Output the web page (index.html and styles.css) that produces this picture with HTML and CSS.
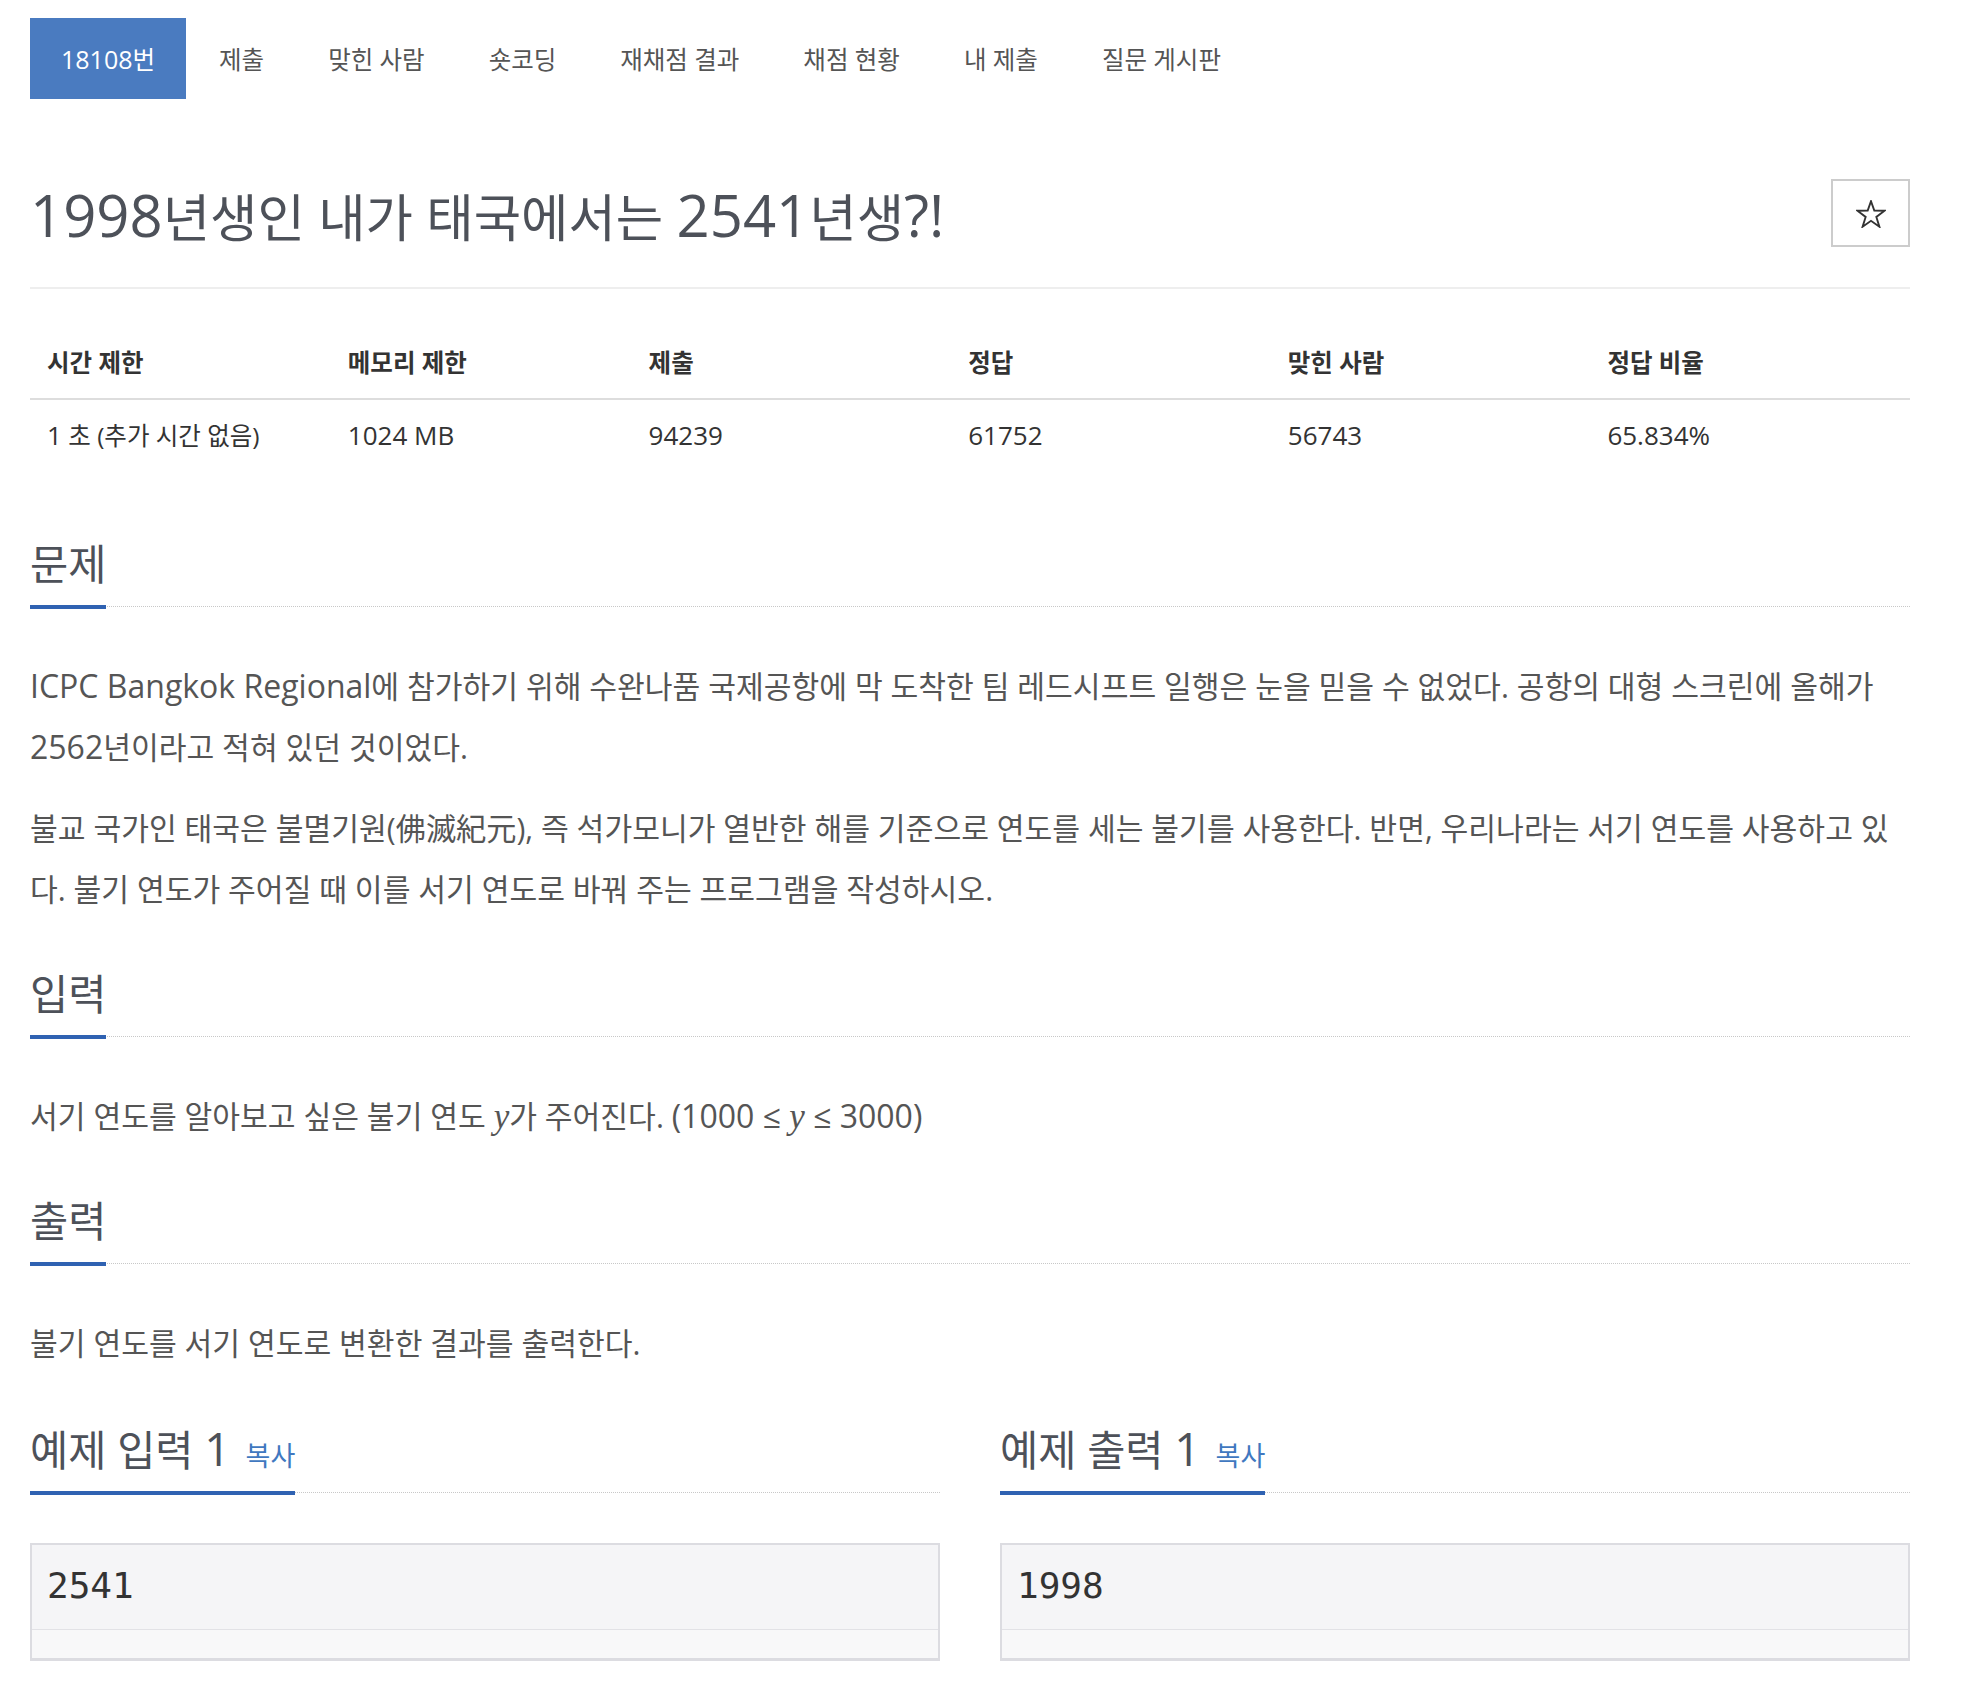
FILE: index.html
```html
<!DOCTYPE html>
<html lang="ko">
<head>
<meta charset="utf-8">
<title>18108번: 1998년생인 내가 태국에서는 2541년생?!</title>
<link rel="stylesheet" href="styles.css">
</head>
<body>
<div class="container">
  <ul class="nav">
    <li class="active"><a href="#"><span class="en">18108</span>번</a></li>
    <li><a href="#">제출</a></li>
    <li><a href="#">맞힌 사람</a></li>
    <li><a href="#">숏코딩</a></li>
    <li><a href="#">재채점 결과</a></li>
    <li><a href="#">채점 현황</a></li>
    <li><a href="#">내 제출</a></li>
    <li><a href="#">질문 게시판</a></li>
  </ul>

  <div class="page-header">
    <h1 class="title"><span class="en">1998</span>년생인 내가 태국에서는 <span class="en">2541</span>년생<span class="en">?!</span></h1>
    <button class="star" type="button" aria-label="즐겨찾기">
      <svg width="30" height="28" viewBox="0 0 30 28"><polygon points="15,1.2 18.3,10.65 28.6,10.7 20.34,16.94 23.4,26.7 15,20.82 6.6,26.7 9.66,16.94 1.4,10.7 11.7,10.65" fill="none" stroke="#333" stroke-width="1.9" stroke-linejoin="miter"/></svg>
    </button>
  </div>

  <table class="info">
    <colgroup><col class="c16"><col class="c16"><col class="c17"><col class="c17"><col class="c17"><col class="c17"></colgroup>
    <thead>
      <tr><th>시간 제한</th><th>메모리 제한</th><th>제출</th><th>정답</th><th>맞힌 사람</th><th>정답 비율</th></tr>
    </thead>
    <tbody>
      <tr>
        <td><span class="en">1</span> 초 (추가 시간 없음)</td>
        <td><span class="en">1024 MB</span></td>
        <td><span class="en">94239</span></td>
        <td><span class="en">61752</span></td>
        <td><span class="en">56743</span></td>
        <td><span class="en">65.834%</span></td>
      </tr>
    </tbody>
  </table>

  <section class="sec">
    <h2 class="headline"><span class="hl">문제</span></h2>
    <div class="text">
      <p><span class="en">ICPC Bangkok Regional</span>에 참가하기 위해 수완나품 국제공항에 막 도착한 팀 레드시프트 일행은 눈을 믿을 수 없었다. 공항의 대형 스크린에 올해가 <span class="en">2562</span>년이라고 적혀 있던 것이었다.</p>
      <p>불교 국가인 태국은 불멸기원(佛滅紀元), 즉 석가모니가 열반한 해를 기준으로 연도를 세는 불기를 사용한다. 반면, 우리나라는 서기 연도를 사용하고 있다. 불기 연도가 주어질 때 이를 서기 연도로 바꿔 주는 프로그램을 작성하시오.</p>
    </div>
  </section>

  <section class="sec">
    <h2 class="headline"><span class="hl">입력</span></h2>
    <div class="text">
      <p>서기 연도를 알아보고 싶은 불기 연도 <i class="math">y</i>가 주어진다. <span class="en">(1000 ≤ </span><i class="math">y</i><span class="en"> ≤ 3000)</span></p>
    </div>
  </section>

  <section class="sec">
    <h2 class="headline"><span class="hl">출력</span></h2>
    <div class="text">
      <p>불기 연도를 서기 연도로 변환한 결과를 출력한다.</p>
    </div>
  </section>

  <section class="sec samples">
    <div class="sample-col">
      <h2 class="headline"><span class="hl">예제 입력 <span class="en">1</span><a class="copy" href="#">복사</a></span></h2>
      <div class="sample">
        <pre>2541</pre>
        <div class="track"></div>
      </div>
    </div>
    <div class="sample-col">
      <h2 class="headline"><span class="hl">예제 출력 <span class="en">1</span><a class="copy" href="#">복사</a></span></h2>
      <div class="sample">
        <pre>1998</pre>
        <div class="track"></div>
      </div>
    </div>
  </section>
</div>
</body>
</html>
```

FILE: styles.css
```css
html, body {
  margin: 0;
  padding: 0;
  background: #fff;
}

body {
  font-family: "Open Sans", "Noto Sans CJK KR", sans-serif;
  color: #555;
}

.en {
  line-height: 1;
}

.container {
  width: 1880px;
  margin-left: 30px;
  display: flex;
  flex-direction: column;
}

/* ---------- nav pills ---------- */
.nav {
  list-style: none;
  margin: 18px 0 0 0;
  padding: 0;
  display: flex;
}

.nav li {
  margin-left: 2px;
}

.nav li:first-child {
  margin-left: 0;
}

.nav a {
  display: block;
  height: 81px;
  box-sizing: border-box;
  padding: 2px 31px 0;
  line-height: 79px;
  font-size: 24.5px;
  color: #555;
  text-decoration: none;
  white-space: nowrap;
}

.nav a .en {
  font-size: 25px;
}

.nav li.active a {
  background: #4a7bc0;
  color: #fff;
}

/* ---------- header ---------- */
.page-header {
  margin-top: 80px;
  padding-bottom: 35px;
  border-bottom: 2px solid #eee;
  display: flex;
  justify-content: space-between;
  align-items: flex-start;
}

.title {
  margin: 3px 0 0 0;
  font-size: 51.5px;
  line-height: 70px;
  font-weight: 400;
  color: #4d5159;
  white-space: nowrap;
}

.title .en {
  font-size: 58px;
}

.star {
  width: 79px;
  height: 68px;
  margin: 0;
  padding: 0;
  border: 2px solid #ccc;
  background: #fff;
  display: flex;
  align-items: center;
  justify-content: center;
}

.star svg {
  display: block;
  margin-top: 1px;
}

/* ---------- info table ---------- */
.info {
  margin-top: 39px;
  margin-bottom: 37px;
  width: 1880px;
  border-collapse: collapse;
  table-layout: fixed;
  color: #333;
}

.info col.c16 { width: 16%; }
.info col.c17 { width: 17%; }

.info th {
  text-align: left;
  font-size: 24.5px;
  font-weight: 700;
  line-height: 30px;
  padding: 20px 17px;
  border-bottom: 2px solid #ddd;
}

.info td {
  font-size: 24.5px;
  line-height: 31px;
  padding: 20px 17px 22px;
  white-space: nowrap;
}

.info td .en {
  font-size: 26px;
}

/* ---------- sections ---------- */
.sec {
  margin-top: 28px;
}

.headline {
  margin: 0 0 49px 0;
  display: flex;
  border-bottom: 1px dotted #c8c8c8;
  font-size: 41.5px;
  font-weight: 400;
  line-height: 52px;
  color: #4d5159;
}

.headline .hl {
  display: block;
  padding-bottom: 15px;
  border-bottom: 4px solid #2f62b2;
  margin-bottom: -3px;
  white-space: nowrap;
}

.headline .en {
  font-size: 46px;
}

.copy {
  font-size: 27px;
  line-height: 1;
  color: #4078c0;
  text-decoration: none;
  margin-left: 15px;
}

.text {
  font-size: 30.2px;
  line-height: 61px;
  color: #555;
}

.text p {
  margin: 0 0 20px 0;
}

.text .en {
  font-size: 32px;
}

.math {
  font-family: "Liberation Serif", serif;
  font-style: italic;
  font-size: 35px;
  line-height: 1;
}

/* ---------- samples ---------- */
.samples {
  margin-top: 30px;
  display: grid;
  grid-template-columns: 910px 910px;
  column-gap: 60px;
}

.samples .headline {
  margin-bottom: 50px;
}

.sample {
  border: 2px solid #dcdce1;
  border-bottom-width: 3px;
}

.sample pre {
  margin: 0;
  padding: 20px 15px 22px;
  background: #f5f5f7;
  border-bottom: 1px solid #e2e2e6;
  font-family: "DejaVu Sans Mono", monospace;
  font-size: 36px;
  line-height: 42px;
  color: #333;
}

.sample .track {
  height: 28px;
  background: #f8f8f9;
}
```
